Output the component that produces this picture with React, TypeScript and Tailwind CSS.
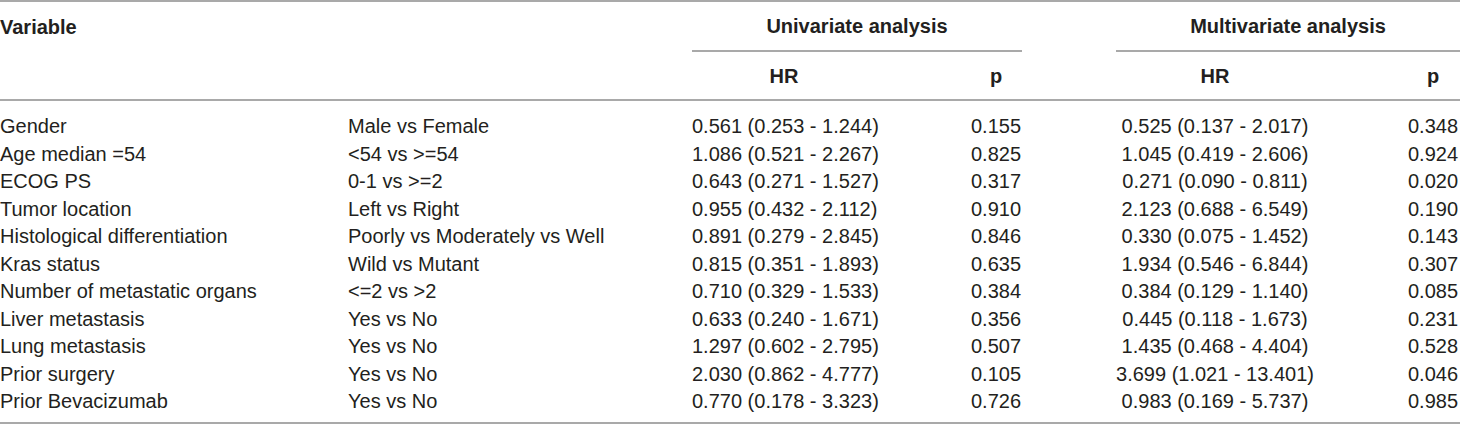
const rows: [string, string, string, string, string, string][] = [
  ["Gender", "Male vs Female", "0.561 (0.253 - 1.244)", "0.155", "0.525 (0.137 - 2.017)", "0.348"],
  ["Age median =54", "<54 vs >=54", "1.086 (0.521 - 2.267)", "0.825", "1.045 (0.419 - 2.606)", "0.924"],
  ["ECOG PS", "0-1 vs >=2", "0.643 (0.271 - 1.527)", "0.317", "0.271 (0.090 - 0.811)", "0.020"],
  ["Tumor location", "Left vs Right", "0.955 (0.432 - 2.112)", "0.910", "2.123 (0.688 - 6.549)", "0.190"],
  ["Histological differentiation", "Poorly vs Moderately vs Well", "0.891 (0.279 - 2.845)", "0.846", "0.330 (0.075 - 1.452)", "0.143"],
  ["Kras status", "Wild vs Mutant", "0.815 (0.351 - 1.893)", "0.635", "1.934 (0.546 - 6.844)", "0.307"],
  ["Number of metastatic organs", "<=2 vs >2", "0.710 (0.329 - 1.533)", "0.384", "0.384 (0.129 - 1.140)", "0.085"],
  ["Liver metastasis", "Yes vs No", "0.633 (0.240 - 1.671)", "0.356", "0.445 (0.118 - 1.673)", "0.231"],
  ["Lung metastasis", "Yes vs No", "1.297 (0.602 - 2.795)", "0.507", "1.435 (0.468 - 4.404)", "0.528"],
  ["Prior surgery", "Yes vs No", "2.030 (0.862 - 4.777)", "0.105", "3.699 (1.021 - 13.401)", "0.046"],
  ["Prior Bevacizumab", "Yes vs No", "0.770 (0.178 - 3.323)", "0.726", "0.983 (0.169 - 5.737)", "0.985"],
];

const cols = "grid grid-cols-[348px_344px_184px_240px_198px_146px]";

export default function App() {
  return (
    <div className="w-[1460px] h-[425px] bg-white text-[#231f20] text-[20px] font-['Liberation_Sans',Arial,sans-serif] overflow-hidden">
      <div className="border-t-2 border-b-2 border-[#a9a9a9]">
        {/* header */}
        <div className={`${cols} grid-rows-[50px_47px]`}>
          <div className="col-span-2 row-span-2 pt-[12px] font-bold leading-[26px]">Variable</div>
          <div className="col-span-2 flex">
            <div className="w-[330px] border-b-2 border-[#a9a9a9] flex items-center justify-center font-bold">
              Univariate analysis
            </div>
          </div>
          <div className="col-span-2 border-b-2 border-[#a9a9a9] flex items-center justify-center font-bold">
            Multivariate analysis
          </div>
          <div className="flex items-center justify-center font-bold">HR</div>
          <div className="flex items-center justify-center font-bold">p</div>
          <div className="flex items-center justify-center font-bold">HR</div>
          <div className="flex items-center justify-center pl-[92px] font-bold">p</div>
        </div>
      </div>

      {/* body */}
      <div className="pt-[10px] pb-[8px] border-b-2 border-[#a9a9a9]">
        {rows.map((r) => (
          <div key={r[0]} className={`${cols} h-[27.5px] items-center`}>
            <div className="whitespace-nowrap">{r[0]}</div>
            <div className="whitespace-nowrap">{r[1]}</div>
            <div className="text-center whitespace-nowrap">{r[2]}</div>
            <div className="text-center">{r[3]}</div>
            <div className="text-center whitespace-nowrap">{r[4]}</div>
            <div className="text-center pl-[92px]">{r[5]}</div>
          </div>
        ))}
      </div>
    </div>
  );
}
